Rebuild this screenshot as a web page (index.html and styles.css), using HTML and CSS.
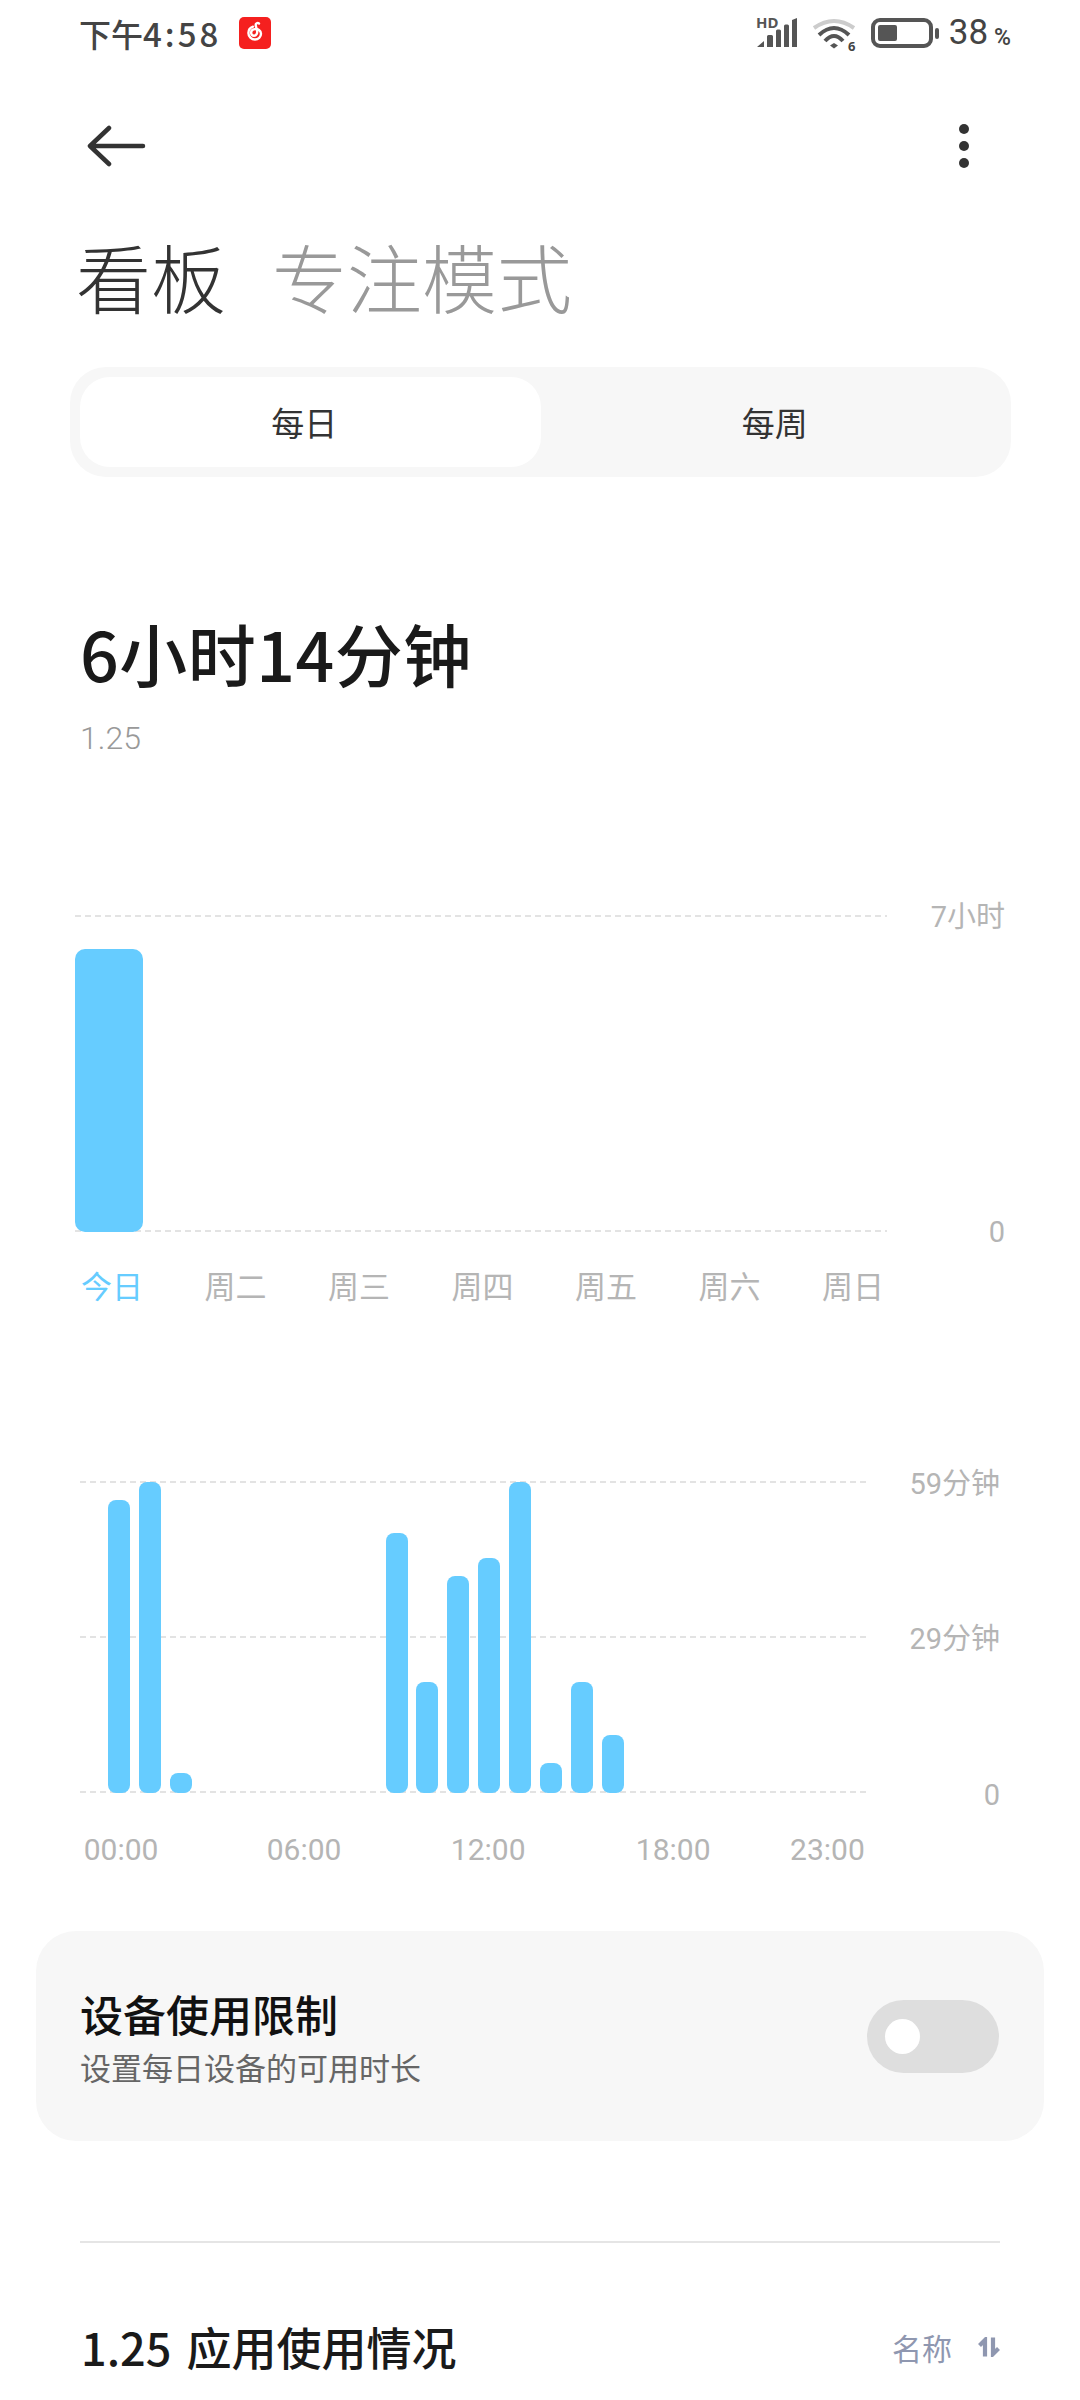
FILE: index.html
```html
<!DOCTYPE html>
<html lang="zh-CN">
<head>
    <meta charset="UTF-8">
    <meta name="viewport" content="width=device-width, initial-scale=1.0">
    <title>看板</title>
    <link rel="stylesheet" href="styles.css">
</head>
<body>
    <div class="phone">
        <div class="status-bar">
            <div class="status-left">
                <span class="clock">下午<span class="clock-num">4:58</span></span>
                <svg class="music-icon" width="32" height="32" viewBox="0 0 32 32">
                    <rect width="32" height="32" rx="5" fill="#f5201f"/>
                    <path d="M20 6.500c-1.500-1-3.500-.2-3.300 1.800l1.300 5.200c.7 2.800-.7 5.300-3 5.300-1.700 0-2.900-1.300-2.900-3 0-2 1.700-3.400 3.600-3.700 3.200-.5 6.300 1.500 6.300 4.700 0 3.200-2.700 5.700-6 5.700-3.600 0-6.600-2.800-6.600-6.400 0-3 2-5.500 4.600-6.400" fill="none" stroke="#fff" stroke-width="2.400" stroke-linecap="round"/>
                </svg>
            </div>
            <div class="status-right">
                <svg class="signal-icon" width="44" height="42" viewBox="0 0 44 42">
                    <text x="1" y="20" class="hd-text">HD</text>
                    <path d="M2 39l7-6v6z M12 39V28.500a1.500 1.500 0 0 1 1.500-1.500h3a1.500 1.500 0 0 1 1.500 1.500V39z M21 39V23a1.500 1.500 0 0 1 1.500-1.500h2a1.500 1.500 0 0 1 1.500 1.500v16z M29 39V18a1.500 1.500 0 0 1 1.500-1.500h2a1.500 1.500 0 0 1 1.500 1.500v21z M37 39V12l5-2v29z" fill="#555"/>
                </svg>
                <svg class="wifi-icon" width="48" height="48" viewBox="0 0 48 48">
                    <path d="M3 20Q23 6 43 20" fill="none" stroke="#ccc" stroke-width="4"/>
                    <path d="M8 27Q23 13 38 27" fill="none" stroke="#555" stroke-width="4"/>
                    <path d="M14 33Q23 23 32 33" fill="none" stroke="#555" stroke-width="4"/>
                    <path d="M19 37.500L23 35L27 37.500L23 40.500z" fill="#555"/>
                    <text x="37" y="43" class="wifi-text">6</text>
                </svg>
                <div class="battery">
                    <div class="battery-body"><div class="battery-fill"></div></div>
                    <div class="battery-tip"></div>
                </div>
                <span class="battery-num">38</span><span class="battery-pct">%</span>
            </div>
        </div>

        <div class="toolbar">
            <svg width="60" height="42" viewBox="0 0 60 42">
                <path d="M3 21H56 M22 3L3 21L22 39" fill="none" stroke="#333" stroke-width="4.500" stroke-linecap="round" stroke-linejoin="round"/>
            </svg>
            <div class="more">
                <span class="dot"></span>
                <span class="dot"></span>
                <span class="dot"></span>
            </div>
        </div>

        <div class="page-tabs">
            <span class="page-tab active">看板</span>
            <span class="page-tab">专注模式</span>
        </div>

        <div class="segment">
            <div class="segment-item selected">每日</div>
            <div class="segment-item">每周</div>
        </div>

        <div class="summary">
            <div class="total">6小时14分钟</div>
            <div class="date">1.25</div>
        </div>

        <div class="week-chart">
            <div class="week-plot">
                <div class="grid-line top"></div>
                <div class="grid-line bottom"></div>
                <div class="week-bar"></div>
                <span class="axis-label week-max">7小时</span>
                <span class="axis-label week-zero">0</span>
            </div>
            <div class="week-labels">
                <span class="today">今日</span>
                <span>周二</span>
                <span>周三</span>
                <span>周四</span>
                <span>周五</span>
                <span>周六</span>
                <span>周日</span>
            </div>
        </div>

        <div class="day-chart">
            <div class="day-plot">
                <div class="grid-line top"></div>
                <div class="grid-line middle"></div>
                <div class="grid-line bottom"></div>
                <div class="hour-bars">
                    <div class="hour"><div class="bar" style="height:293px"></div></div>
                    <div class="hour"><div class="bar" style="height:311px"></div></div>
                    <div class="hour"><div class="bar" style="height:20px"></div></div>
                    <div class="hour"></div>
                    <div class="hour"></div>
                    <div class="hour"></div>
                    <div class="hour"></div>
                    <div class="hour"></div>
                    <div class="hour"></div>
                    <div class="hour"><div class="bar" style="height:260px"></div></div>
                    <div class="hour"><div class="bar" style="height:111px"></div></div>
                    <div class="hour"><div class="bar" style="height:217px"></div></div>
                    <div class="hour"><div class="bar" style="height:235px"></div></div>
                    <div class="hour"><div class="bar" style="height:311px"></div></div>
                    <div class="hour"><div class="bar" style="height:30px"></div></div>
                    <div class="hour"><div class="bar" style="height:111px"></div></div>
                    <div class="hour"><div class="bar" style="height:58px"></div></div>
                </div>
                <span class="axis-label day-max">59分钟</span>
                <span class="axis-label day-mid">29分钟</span>
                <span class="axis-label day-zero">0</span>
            </div>
            <div class="day-labels">
                <span class="at-00">00:00</span>
                <span class="at-06">06:00</span>
                <span class="at-12">12:00</span>
                <span class="at-18">18:00</span>
                <span class="at-23">23:00</span>
            </div>
        </div>

        <div class="limit-card">
            <div class="limit-text">
                <div class="limit-title">设备使用限制</div>
                <div class="limit-sub">设置每日设备的可用时长</div>
            </div>
            <div class="toggle"><div class="knob"></div></div>
        </div>

        <div class="divider"></div>

        <div class="usage-head">
            <div class="usage-title">1.25 应用使用情况</div>
            <div class="sort">
                <span>名称</span>
                <svg width="22" height="20" viewBox="0 0 22 20">
                    <path d="M7 19.500V3L1.500 8.500 M15 .5V17L20.500 11.500" fill="none" stroke="#8f97b0" stroke-width="4.200"/>
                </svg>
            </div>
        </div>
    </div>
</body>
</html>
```

FILE: styles.css
```css
* {
    box-sizing: border-box;
}
body {
    margin: 0;
    background-color: #fff;
    font-family: Roboto, "Noto Sans CJK SC", sans-serif;
}
.phone {
    width: 1080px;
    height: 2400px;
    overflow: hidden;
    position: relative;
}

/* status bar */
.status-bar {
    display: flex;
    justify-content: space-between;
    align-items: flex-start;
    height: 68px;
    padding: 17px 69px 0 79px;
}
.status-left {
    display: flex;
    align-items: center;
    gap: 18px;
}
.clock {
    font-family: "Noto Sans CJK SC", sans-serif;
    font-size: 32px;
    font-weight: 500;
    line-height: 32px;
    color: #444;
}
.clock-num {
    font-size: 33px;
    letter-spacing: 3px;
}
.music-icon {
    display: block;
}
.status-right {
    display: flex;
    align-items: flex-start;
}
.signal-icon {
    margin-top: -9px;
    margin-right: 12px;
}
.hd-text {
    font-family: "Noto Sans", sans-serif;
    font-size: 15px;
    font-weight: 700;
    fill: #555;
}
.wifi-icon {
    margin-top: -9px;
    margin-right: 12px;
}
.wifi-text {
    font-family: "Noto Sans", sans-serif;
    font-size: 13px;
    font-weight: 700;
    fill: #444;
}
.battery {
    display: flex;
    align-items: center;
    height: 30px;
    gap: 2px;
    margin-top: 1px;
    margin-right: 10px;
}
.battery-body {
    width: 62px;
    height: 30px;
    border: 4px solid #555;
    border-radius: 9px;
    padding: 3px;
}
.battery-fill {
    width: 19px;
    height: 100%;
    background-color: #555;
    border-radius: 2px;
}
.battery-tip {
    width: 4px;
    height: 11px;
    background-color: #555;
    border-radius: 2px;
}
.battery-num {
    font-size: 35px;
    line-height: 32px;
    color: #444;
}
.battery-pct {
    font-size: 23px;
    font-weight: 500;
    line-height: 32px;
    color: #444;
    margin-left: 6px;
    margin-top: 5px;
}

/* toolbar */
.toolbar {
    display: flex;
    justify-content: space-between;
    align-items: center;
    height: 56px;
    margin-top: 50px;
    padding: 0 111px 0 87px;
}
.toolbar svg {
    display: block;
}
.more {
    display: flex;
    flex-direction: column;
    gap: 7px;
}
.dot {
    width: 10px;
    height: 10px;
    background-color: #333;
    border-radius: 50%;
}

/* page title */
.page-tabs {
    display: flex;
    gap: 46px;
    margin-top: 54px;
    padding-left: 76px;
}
.page-tab {
    font-family: "Noto Sans CJK SC", sans-serif;
    font-size: 75px;
    font-weight: 300;
    line-height: 96px;
    color: #999;
}
.page-tab.active {
    color: #333;
}

/* daily / weekly switch */
.segment {
    display: flex;
    width: 941px;
    height: 110px;
    margin: 43px 0 0 70px;
    padding: 10px;
    background-color: #f7f7f7;
    border-radius: 36px;
}
.segment-item {
    width: 50%;
    display: flex;
    align-items: center;
    justify-content: center;
    padding-left: 8px;
    font-family: "Noto Sans CJK SC", sans-serif;
    font-size: 33px;
    color: #333;
}
.segment-item.selected {
    padding-left: 0;
    padding-right: 12px;
    background-color: #fff;
    border-radius: 30px;
}

/* summary */
.summary {
    margin-top: 131px;
    padding-left: 80px;
}
.total {
    font-family: "Noto Sans CJK SC", sans-serif;
    font-size: 68px;
    font-weight: 500;
    line-height: 90px;
    letter-spacing: .5px;
    color: #1a1a1a;
}
.date {
    font-size: 32px;
    font-weight: 300;
    line-height: 40px;
    margin-top: 20px;
    color: #999;
}

/* charts */
.grid-line {
    position: absolute;
    left: 0;
    height: 2px;
    background-image: repeating-linear-gradient(to right, #e3e3e3 0, #e3e3e3 6px, transparent 6px, transparent 10px);
}
.grid-line.top {
    top: 0;
}
.axis-label {
    position: absolute;
    right: 0;
    font-size: 29px;
    line-height: 40px;
    color: #b5b5b5;
}
.week-chart {
    margin: 157px 75px 0;
}
.week-plot {
    position: relative;
    height: 317px;
    display: flex;
    align-items: flex-end;
}
.week-plot .grid-line {
    width: 812px;
}
.week-plot .grid-line.bottom {
    bottom: 0;
}
.week-bar {
    position: relative;
    width: 68px;
    height: 283px;
    background-color: #66ccff;
    border-radius: 10px;
}
.week-max {
    top: -18px;
}
.week-zero {
    bottom: -20px;
}
.week-labels {
    display: flex;
    justify-content: space-between;
    width: 812px;
    margin-top: 36px;
    padding: 0 3px 0 6px;
    font-size: 31px;
    line-height: 40px;
    color: #b5b5b5;
}
.today {
    color: #66ccff;
}
.day-chart {
    margin: 173px 80px 0;
}
.day-plot {
    position: relative;
    height: 312px;
}
.day-plot .grid-line {
    width: 786px;
}
.grid-line.middle {
    top: 155px;
}
.day-plot .grid-line.bottom {
    bottom: 0;
}
.hour-bars {
    position: absolute;
    left: 28px;
    bottom: 0;
    display: flex;
    align-items: flex-end;
    height: 312px;
}
.hour {
    width: 30.85px;
}
.bar {
    width: 22px;
    background-color: #66ccff;
    border-radius: 8px;
}
.day-max {
    top: -17px;
}
.day-mid {
    top: 138px;
}
.day-zero {
    bottom: -22px;
}
/* one column per hour, each label sits centred on its hour */
.day-labels {
    display: grid;
    grid-template-columns: repeat(24, 30.85px);
    margin-top: 39px;
    padding-left: 22.6px;
    font-size: 30px;
    line-height: 36px;
    color: #b5b5b5;
}
.day-labels span {
    justify-self: center;
    grid-row: 1;
}
.at-00 { grid-column: 1; margin-left: 6px; }
.at-06 { grid-column: 7; margin-left: 2px; }
.at-12 { grid-column: 13; }
.at-18 { grid-column: 19; }
.at-23 { grid-column: 24; }

/* limit card */
.limit-card {
    display: flex;
    justify-content: space-between;
    align-items: center;
    height: 210px;
    margin: 63px 36px 0;
    padding: 0 45px 0 44px;
    background-color: #f7f7f7;
    border-radius: 40px;
}
.limit-title {
    font-family: "Noto Sans CJK SC", sans-serif;
    font-size: 43px;
    font-weight: 500;
    line-height: 56px;
    color: #111;
}
.limit-sub {
    font-family: "Noto Sans CJK SC", sans-serif;
    font-size: 31px;
    line-height: 40px;
    margin-top: 6px;
    color: #666;
}
.toggle {
    display: flex;
    align-items: center;
    width: 132px;
    height: 73px;
    padding-left: 18px;
    background-color: #dedede;
    border-radius: 37px;
}
.knob {
    width: 35px;
    height: 35px;
    background-color: #fff;
    border-radius: 50%;
}

/* usage section */
.divider {
    height: 2px;
    margin: 100px 80px 0;
    background-color: #e5e5e5;
}
.usage-head {
    display: flex;
    justify-content: space-between;
    align-items: center;
    margin-top: 76px;
    padding: 0 80px 0 81px;
}
.usage-title {
    font-family: "Noto Sans CJK SC", sans-serif;
    font-size: 45px;
    font-weight: 500;
    line-height: 56px;
    word-spacing: 5px;
    color: #1a1a1a;
}
.sort {
    display: flex;
    align-items: center;
    gap: 26px;
    font-family: "Noto Sans CJK SC", sans-serif;
    font-size: 30px;
    color: #8f97b0;
}
```
